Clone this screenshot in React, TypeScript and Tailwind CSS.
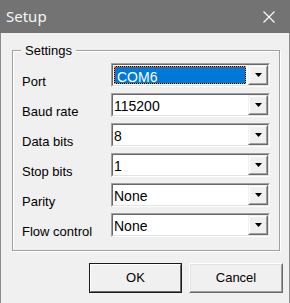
import React from "react";

function Arrow() {
  return (
    <svg width="7" height="4" viewBox="0 0 7 4" className="block">
      <polygon points="0,0 7,0 3.5,4" fill="#000" />
    </svg>
  );
}

function Combo({ value, focused }: { value: string; focused?: boolean }) {
  return (
    <div className="w-[159px] h-[24px] border border-t-[#a0a0a0] border-l-[#a0a0a0] border-b-white border-r-white">
      <div className="h-full border border-t-[#696969] border-l-[#696969] border-b-[#e3e3e3] border-r-[#e3e3e3] bg-white flex">
        {focused ? (
          <div className="flex-1 pl-[1px] pr-[2px] py-[1px]">
            <div className="w-full h-full bg-black">
              <div className="w-full h-full border border-dotted border-[#ff8c28] bg-[#0078d7] bg-clip-padding text-white text-[14px] leading-[18px] pl-[2px] pt-[1px]">
                {value}
              </div>
            </div>
          </div>
        ) : (
          <div className="flex-1 text-[14px] leading-[20px] pt-[1px] pl-[1px] text-black">{value}</div>
        )}
        <div className="w-[20px] h-full bg-[#f0f0f0] border border-t-[#f0f0f0] border-l-[#f0f0f0] border-b-[#696969] border-r-[#696969]">
          <div className="w-full h-full border border-t-white border-l-white border-b-[#a0a0a0] border-r-[#a0a0a0] flex items-center justify-center">
            <Arrow />
          </div>
        </div>
      </div>
    </div>
  );
}

function Row({ label, value, focused }: { label: string; value: string; focused?: boolean }) {
  return (
    <div className="flex h-[24px]">
      <div className="w-[89px] pt-[11px] leading-[15px] text-[13px] text-black whitespace-nowrap">{label}</div>
      <Combo value={value} focused={focused} />
    </div>
  );
}

function Button({ children, isDefault, w }: { children: React.ReactNode; isDefault?: boolean; w: string }) {
  return (
    <div className={`${w} h-[30px] ${isDefault ? "border border-[#1a1a1a]" : "border border-t-white border-l-white border-b-[#696969] border-r-[#696969]"}`}>
      <div className={`w-full h-full ${isDefault ? "border border-t-white border-l-white border-b-[#696969] border-r-[#696969]" : "border border-t-[#e3e3e3] border-l-[#e3e3e3] border-b-[#a0a0a0] border-r-[#a0a0a0]"} bg-[#f0f0f0] flex items-center justify-center text-[13px] text-black`}>
        {children}
      </div>
    </div>
  );
}

export default function App() {
  return (
    <div className="w-[290px] h-[303px] flex flex-col bg-[#f0f0f0] font-['Liberation_Sans',Arial,sans-serif] overflow-hidden">
      <div className="h-[33px] bg-[#737373] flex items-center justify-between pl-[6px] pr-[15px] shrink-0">
        <span className="font-['Noto_Sans',sans-serif] text-[15px] text-[#f5f5f5]">Setup</span>
        <svg width="12" height="12" viewBox="0 0 12 12" className="block mt-[1px]">
          <line x1="0.5" y1="0.5" x2="11.5" y2="11.5" stroke="#fff" strokeWidth="1.1" />
          <line x1="11.5" y1="0.5" x2="0.5" y2="11.5" stroke="#fff" strokeWidth="1.1" />
        </svg>
      </div>
      <div className="flex-1 border-x border-[#8c8c8c] flex flex-col">
        <fieldset className="ml-[11px] mt-[10px] w-[268px] h-[208px] border border-[#a0a0a0] shadow-[inset_1px_1px_0_#fff,1px_1px_0_#fff] pl-[9px] pt-[5px]">
          <legend className="-ml-[1px] px-[4px] text-[13px] leading-[15px] text-black bg-[#f0f0f0]">Settings</legend>
          <div className="flex flex-col gap-[6px]">
            <Row label="Port" value="COM6" focused />
            <Row label="Baud rate" value="115200" />
            <Row label="Data bits" value="8" />
            <Row label="Stop bits" value="1" />
            <Row label="Parity" value="None" />
            <Row label="Flow control" value="None" />
          </div>
        </fieldset>
        <div className="flex justify-end gap-[7px] pr-[6px] mt-[12px]">
          <Button isDefault w="w-[93px]">OK</Button>
          <Button w="w-[94px]">Cancel</Button>
        </div>
      </div>
    </div>
  );
}
